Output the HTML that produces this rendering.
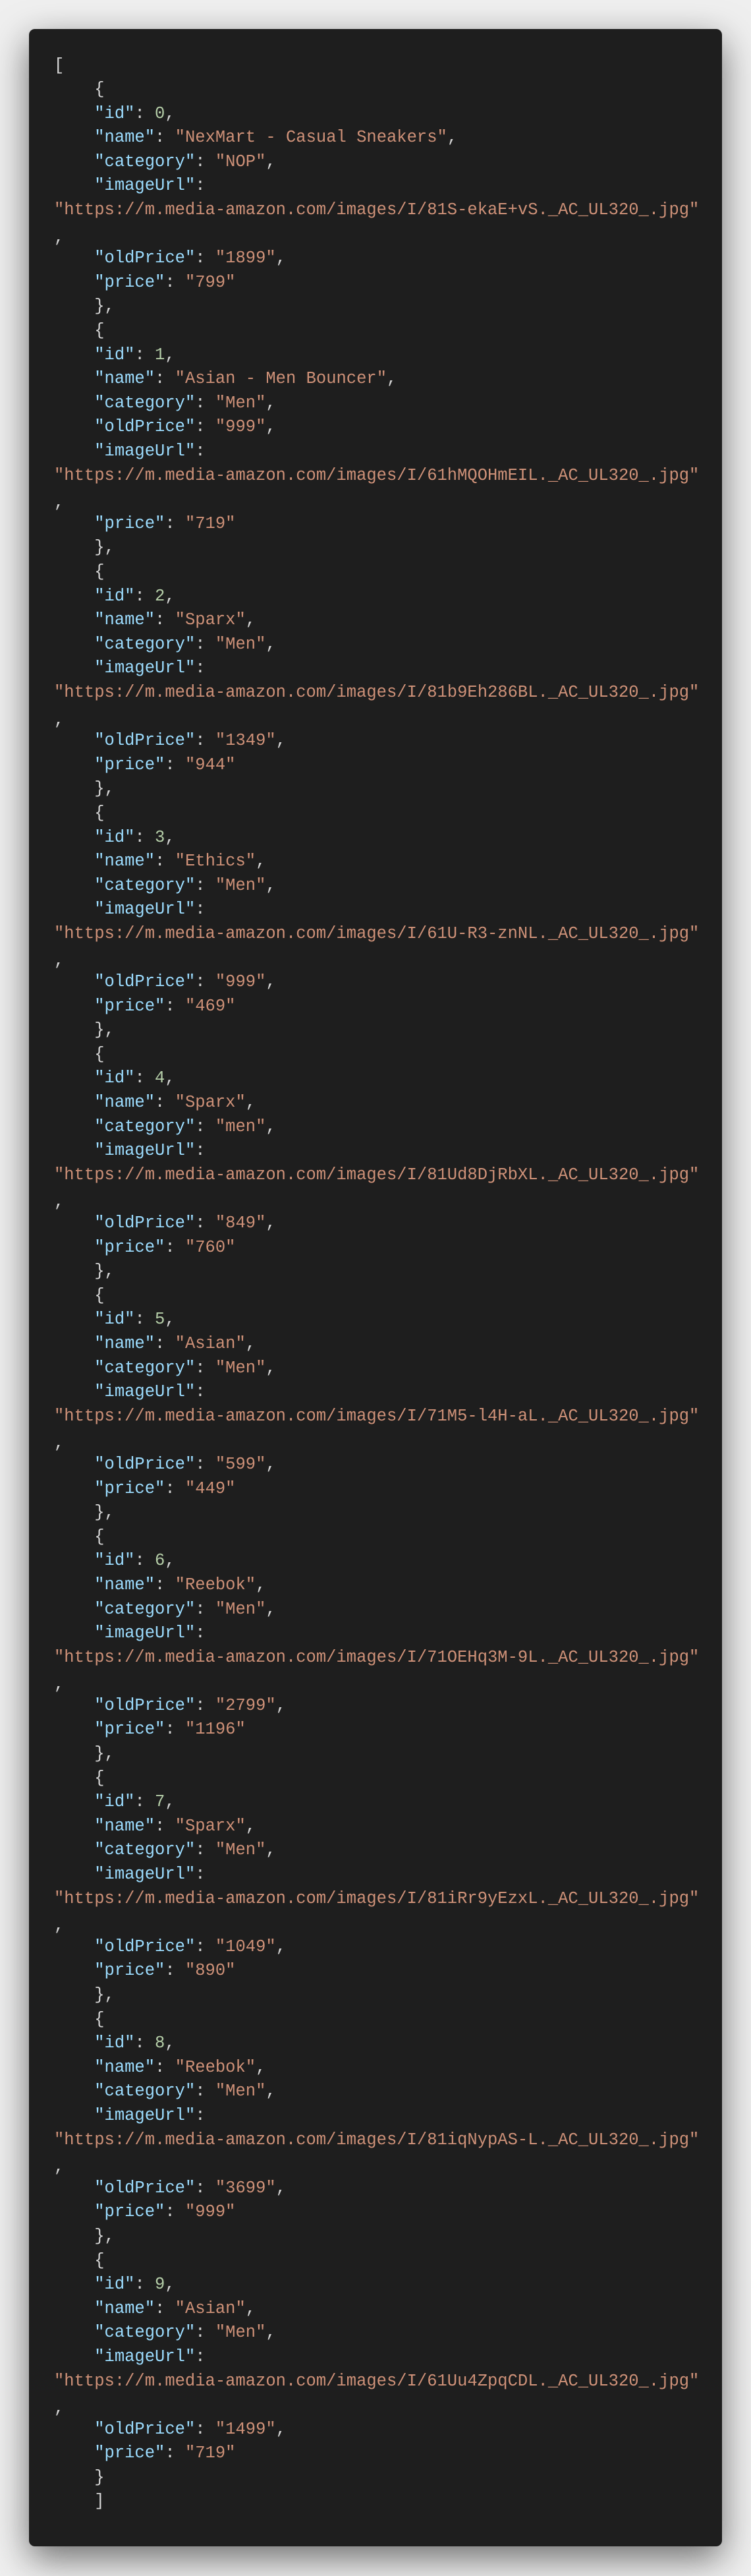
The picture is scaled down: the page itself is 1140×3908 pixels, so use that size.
<!DOCTYPE html>
<html><head><meta charset="utf-8">
<style>
html,body{margin:0;padding:0;}
body{width:1140px;height:3908px;background:#efefef;overflow:hidden;position:relative;}
.card{position:absolute;left:44px;top:44px;width:1052px;height:3819px;background:#1e1e1e;border-radius:9px;box-shadow:0 18px 55px rgba(0,0,0,.55);}
.code{position:absolute;left:38px;top:37.5px;font-family:"Liberation Mono",monospace;font-size:25.5px;color:#d4d4d4;}
.l{height:36.6px;line-height:36.6px;white-space:pre;}
.c{position:relative;top:5px;}
.k{color:#9cdcfe}.s{color:#ce9178}.n{color:#b5cea8}
</style></head><body>
<div class="card"><div class="code">
<div class="l">[</div>
<div class="l">    {</div>
<div class="l">    <span class="k">"id"</span>: <span class="n">0</span>,</div>
<div class="l">    <span class="k">"name"</span>: <span class="s">"NexMart - Casual Sneakers"</span>,</div>
<div class="l">    <span class="k">"category"</span>: <span class="s">"NOP"</span>,</div>
<div class="l">    <span class="k">"imageUrl"</span>:</div>
<div class="l"><span class="s">"https://m.media-amazon.com/images/I/81S-ekaE+vS._AC_UL320_.jpg"</span></div>
<div class="l c">,</div>
<div class="l">    <span class="k">"oldPrice"</span>: <span class="s">"1899"</span>,</div>
<div class="l">    <span class="k">"price"</span>: <span class="s">"799"</span></div>
<div class="l">    },</div>
<div class="l">    {</div>
<div class="l">    <span class="k">"id"</span>: <span class="n">1</span>,</div>
<div class="l">    <span class="k">"name"</span>: <span class="s">"Asian - Men Bouncer"</span>,</div>
<div class="l">    <span class="k">"category"</span>: <span class="s">"Men"</span>,</div>
<div class="l">    <span class="k">"oldPrice"</span>: <span class="s">"999"</span>,</div>
<div class="l">    <span class="k">"imageUrl"</span>:</div>
<div class="l"><span class="s">"https://m.media-amazon.com/images/I/61hMQOHmEIL._AC_UL320_.jpg"</span></div>
<div class="l c">,</div>
<div class="l">    <span class="k">"price"</span>: <span class="s">"719"</span></div>
<div class="l">    },</div>
<div class="l">    {</div>
<div class="l">    <span class="k">"id"</span>: <span class="n">2</span>,</div>
<div class="l">    <span class="k">"name"</span>: <span class="s">"Sparx"</span>,</div>
<div class="l">    <span class="k">"category"</span>: <span class="s">"Men"</span>,</div>
<div class="l">    <span class="k">"imageUrl"</span>:</div>
<div class="l"><span class="s">"https://m.media-amazon.com/images/I/81b9Eh286BL._AC_UL320_.jpg"</span></div>
<div class="l c">,</div>
<div class="l">    <span class="k">"oldPrice"</span>: <span class="s">"1349"</span>,</div>
<div class="l">    <span class="k">"price"</span>: <span class="s">"944"</span></div>
<div class="l">    },</div>
<div class="l">    {</div>
<div class="l">    <span class="k">"id"</span>: <span class="n">3</span>,</div>
<div class="l">    <span class="k">"name"</span>: <span class="s">"Ethics"</span>,</div>
<div class="l">    <span class="k">"category"</span>: <span class="s">"Men"</span>,</div>
<div class="l">    <span class="k">"imageUrl"</span>:</div>
<div class="l"><span class="s">"https://m.media-amazon.com/images/I/61U-R3-znNL._AC_UL320_.jpg"</span></div>
<div class="l c">,</div>
<div class="l">    <span class="k">"oldPrice"</span>: <span class="s">"999"</span>,</div>
<div class="l">    <span class="k">"price"</span>: <span class="s">"469"</span></div>
<div class="l">    },</div>
<div class="l">    {</div>
<div class="l">    <span class="k">"id"</span>: <span class="n">4</span>,</div>
<div class="l">    <span class="k">"name"</span>: <span class="s">"Sparx"</span>,</div>
<div class="l">    <span class="k">"category"</span>: <span class="s">"men"</span>,</div>
<div class="l">    <span class="k">"imageUrl"</span>:</div>
<div class="l"><span class="s">"https://m.media-amazon.com/images/I/81Ud8DjRbXL._AC_UL320_.jpg"</span></div>
<div class="l c">,</div>
<div class="l">    <span class="k">"oldPrice"</span>: <span class="s">"849"</span>,</div>
<div class="l">    <span class="k">"price"</span>: <span class="s">"760"</span></div>
<div class="l">    },</div>
<div class="l">    {</div>
<div class="l">    <span class="k">"id"</span>: <span class="n">5</span>,</div>
<div class="l">    <span class="k">"name"</span>: <span class="s">"Asian"</span>,</div>
<div class="l">    <span class="k">"category"</span>: <span class="s">"Men"</span>,</div>
<div class="l">    <span class="k">"imageUrl"</span>:</div>
<div class="l"><span class="s">"https://m.media-amazon.com/images/I/71M5-l4H-aL._AC_UL320_.jpg"</span></div>
<div class="l c">,</div>
<div class="l">    <span class="k">"oldPrice"</span>: <span class="s">"599"</span>,</div>
<div class="l">    <span class="k">"price"</span>: <span class="s">"449"</span></div>
<div class="l">    },</div>
<div class="l">    {</div>
<div class="l">    <span class="k">"id"</span>: <span class="n">6</span>,</div>
<div class="l">    <span class="k">"name"</span>: <span class="s">"Reebok"</span>,</div>
<div class="l">    <span class="k">"category"</span>: <span class="s">"Men"</span>,</div>
<div class="l">    <span class="k">"imageUrl"</span>:</div>
<div class="l"><span class="s">"https://m.media-amazon.com/images/I/71OEHq3M-9L._AC_UL320_.jpg"</span></div>
<div class="l c">,</div>
<div class="l">    <span class="k">"oldPrice"</span>: <span class="s">"2799"</span>,</div>
<div class="l">    <span class="k">"price"</span>: <span class="s">"1196"</span></div>
<div class="l">    },</div>
<div class="l">    {</div>
<div class="l">    <span class="k">"id"</span>: <span class="n">7</span>,</div>
<div class="l">    <span class="k">"name"</span>: <span class="s">"Sparx"</span>,</div>
<div class="l">    <span class="k">"category"</span>: <span class="s">"Men"</span>,</div>
<div class="l">    <span class="k">"imageUrl"</span>:</div>
<div class="l"><span class="s">"https://m.media-amazon.com/images/I/81iRr9yEzxL._AC_UL320_.jpg"</span></div>
<div class="l c">,</div>
<div class="l">    <span class="k">"oldPrice"</span>: <span class="s">"1049"</span>,</div>
<div class="l">    <span class="k">"price"</span>: <span class="s">"890"</span></div>
<div class="l">    },</div>
<div class="l">    {</div>
<div class="l">    <span class="k">"id"</span>: <span class="n">8</span>,</div>
<div class="l">    <span class="k">"name"</span>: <span class="s">"Reebok"</span>,</div>
<div class="l">    <span class="k">"category"</span>: <span class="s">"Men"</span>,</div>
<div class="l">    <span class="k">"imageUrl"</span>:</div>
<div class="l"><span class="s">"https://m.media-amazon.com/images/I/81iqNypAS-L._AC_UL320_.jpg"</span></div>
<div class="l c">,</div>
<div class="l">    <span class="k">"oldPrice"</span>: <span class="s">"3699"</span>,</div>
<div class="l">    <span class="k">"price"</span>: <span class="s">"999"</span></div>
<div class="l">    },</div>
<div class="l">    {</div>
<div class="l">    <span class="k">"id"</span>: <span class="n">9</span>,</div>
<div class="l">    <span class="k">"name"</span>: <span class="s">"Asian"</span>,</div>
<div class="l">    <span class="k">"category"</span>: <span class="s">"Men"</span>,</div>
<div class="l">    <span class="k">"imageUrl"</span>:</div>
<div class="l"><span class="s">"https://m.media-amazon.com/images/I/61Uu4ZpqCDL._AC_UL320_.jpg"</span></div>
<div class="l c">,</div>
<div class="l">    <span class="k">"oldPrice"</span>: <span class="s">"1499"</span>,</div>
<div class="l">    <span class="k">"price"</span>: <span class="s">"719"</span></div>
<div class="l">    }</div>
<div class="l">    ]</div>
</div></div>
</body></html>
